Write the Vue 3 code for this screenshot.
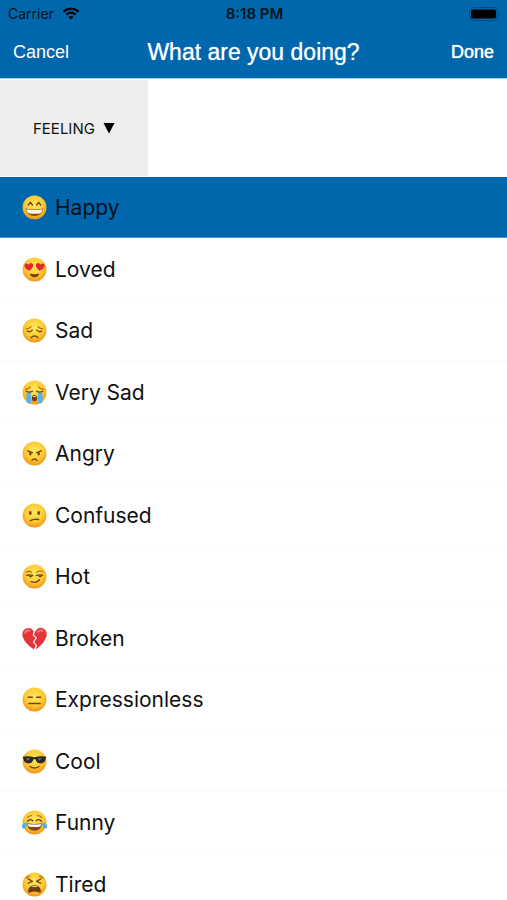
<template>
  <div class="screen">
    <header class="top-bar">
      <!-- Status bar -->
      <div class="status-bar">
        <div class="status-left">
          <span>Carrier</span>
          <svg class="wifi-icon" viewBox="0 0 18 13" aria-hidden="true">
            <path d="M9 12.6 L6.4 9.9 Q9 7.9 11.6 9.9 Z" fill="#000" />
            <path d="M4.3 7.6 Q9 3.8 13.7 7.6" fill="none" stroke="#000" stroke-width="2.2" />
            <path d="M1.3 4.7 Q9 -1.6 16.7 4.7" fill="none" stroke="#000" stroke-width="2.2" />
          </svg>
        </div>
        <span class="status-time">8:18 PM</span>
        <div class="status-right">
          <svg class="battery-icon" viewBox="0 0 32 14" aria-hidden="true">
            <rect x="0.5" y="0.5" width="28" height="13" rx="4" fill="none" stroke="#004a80" />
            <rect x="2" y="2.5" width="25" height="9" rx="2" fill="#000" />
            <path d="M30 5 Q32 7 30 9 Z" fill="#004a80" />
          </svg>
        </div>
      </div>

      <!-- Navigation -->
      <nav class="nav-bar">
        <button type="button" class="nav-btn">Cancel</button>
        <h1 class="nav-title">What are you doing?</h1>
        <button type="button" class="nav-btn done">Done</button>
      </nav>
    </header>

    <!-- Category and free text -->
    <div class="filter-row">
      <button type="button" class="category-btn">
        <span>FEELING</span>
        <svg class="arrow-icon" viewBox="0 0 12 12" aria-hidden="true">
          <path d="M0.5 1 H11.5 L6 11.5 Z" fill="#000" />
        </svg>
      </button>
      <input v-model="note" class="note-input" type="text" aria-label="Feeling" />
    </div>

    <!-- Feelings -->
    <ul class="feeling-list">
      <li v-for="item in feelings" :key="item.id" class="feeling-item">
        <button
          type="button"
          class="feeling-btn"
          :class="{ selected: item.id === selectedId }"
          :aria-pressed="item.id === selectedId"
          @click="selectFeeling(item.id)"
        >
          <svg class="emoji" viewBox="0 0 24 24" aria-hidden="true">
            <defs>
              <radialGradient :id="`face-${item.id}`" cx="50%" cy="38%" r="62%">
                <stop offset="0" stop-color="#ffe85c" />
                <stop offset="0.6" stop-color="#fdcb35" />
                <stop offset="1" stop-color="#ee941b" />
              </radialGradient>
            </defs>

            <circle
              v-if="item.id !== 'broken'"
              cx="12"
              cy="12"
              r="11.5"
              :fill="`url(#face-${item.id})`"
            />

            <g v-if="item.id === 'happy'">
              <path d="M6 9.6 L8 7 L10 9.6 M14 9.6 L16 7 L18 9.6" class="line" />
              <path d="M3.6 13 Q12 14.6 20.4 13 Q19.4 20.2 12 20.2 Q4.6 20.2 3.6 13 Z" fill="#8a4b12" />
              <path d="M4.2 13.7 Q12 15.2 19.8 13.7 Q19.2 17 17.8 17.4 Q12 18.6 6.2 17.4 Q4.8 17 4.2 13.7 Z" fill="#fffbe8" />
            </g>

            <g v-else-if="item.id === 'loved'">
              <path d="M7.2 13.2 Q1.6 10.6 2.4 7.6 Q3.4 5.2 6.2 7.2 Q8.2 4.6 10.4 6.6 Q11.8 9.2 7.2 13.2 Z" fill="#e8262e" />
              <path d="M16.8 13.2 Q22.4 10.6 21.6 7.6 Q20.6 5.2 17.8 7.2 Q15.8 4.6 13.6 6.6 Q12.2 9.2 16.8 13.2 Z" fill="#e8262e" />
              <path d="M7.4 15.8 Q12 17.2 16.6 15.8 Q15.8 19.4 12 19.4 Q8.2 19.4 7.4 15.8 Z" fill="#7d3c12" />
            </g>

            <g v-else-if="item.id === 'sad'">
              <path d="M4 10.4 Q6.4 10.6 8.8 8.2 M15.2 8.2 Q17.6 10.6 20 10.4" class="thin" />
              <path d="M5.2 12.6 Q8 13.8 9.8 11.6 M14.2 11.6 Q16 13.8 18.8 12.6" class="line" />
              <path d="M8.8 18.8 Q12 15.4 15.2 18.8" class="line" />
            </g>

            <g v-else-if="item.id === 'very-sad'">
              <path d="M3.4 9 Q6 8.8 8 6.6 M16 6.6 Q18 8.8 20.6 9" class="thin" />
              <path d="M4.4 12.2 H8.6 V21.6 Q6.2 23.4 4.4 21.4 Z" fill="#51b4ee" />
              <path d="M15.4 12.2 H19.6 V21.4 Q17.8 23.4 15.4 21.6 Z" fill="#51b4ee" />
              <path d="M4 10.8 Q7 12.6 10 10.8 M14 10.8 Q17 12.6 20 10.8" class="line" />
              <ellipse cx="12" cy="17.4" rx="2.6" ry="3" fill="#7b3d13" />
              <path d="M10.2 16.2 Q12 14.4 13.8 16.2 Z" fill="#fff" />
            </g>

            <g v-else-if="item.id === 'angry'">
              <path d="M5.4 9.4 L10 11.2 M18.6 9.4 L14 11.2" class="line" />
              <ellipse cx="8" cy="12.2" rx="1.2" ry="1.7" fill="#70420f" />
              <ellipse cx="16" cy="12.2" rx="1.2" ry="1.7" fill="#70420f" />
              <path d="M9.4 18.6 Q12 16 14.6 18.6" class="line" />
            </g>

            <g v-else-if="item.id === 'confused'">
              <ellipse cx="8" cy="9.6" rx="1.3" ry="1.9" fill="#70420f" />
              <ellipse cx="16" cy="9.6" rx="1.3" ry="1.9" fill="#70420f" />
              <path d="M8 17 Q11.4 15 16 15.8" class="line" />
            </g>

            <g v-else-if="item.id === 'hot'">
              <path d="M3.8 8 Q6.6 6.2 9.4 8 M14 8 Q17.2 5.8 20 7.6" class="thin" />
              <path d="M4.6 10.8 Q7.4 10 10.2 11 M13.8 11 Q16.8 10 19.6 10.8" class="line" />
              <path d="M7.4 11.4 Q8.2 13 9.6 11.4 M16.2 11.4 Q17.4 13 18.6 11.4" class="line" />
              <path d="M8.6 17 Q14.2 18.8 16.8 15" class="line" />
            </g>

            <g v-else-if="item.id === 'broken'">
              <path d="M11.2 5.2 Q8.4 0.6 4 2.4 Q-0.6 4.6 0.6 10 Q2.4 16.4 11.4 22.6 L13.2 18.8 L10.4 15.4 L13 11.6 L10.2 8.6 Z" fill="#e3343a" />
              <path d="M12.8 5 Q16 0.4 20.4 2.4 Q24.8 4.8 23.4 10 Q21.4 16.8 12.8 22.8 L14.6 18.8 L11.6 15.4 L14.4 11.4 L11.4 8.4 Z" fill="#e3343a" />
              <path d="M3 6.6 Q4 3.6 7.2 4.4 M15.4 5.6 Q17.4 3.4 20 4.8" fill="none" stroke="#f98078" stroke-width="1.6" stroke-linecap="round" />
            </g>

            <g v-else-if="item.id === 'expressionless'">
              <path d="M6 9.8 H10 M14 9.8 H18" class="line" />
              <path d="M6.6 15.8 H17.4" class="line" />
            </g>

            <g v-else-if="item.id === 'cool'">
              <path d="M0.6 7.4 Q6 6.4 12 8 Q18 6.4 23.4 7.4 L22.8 9.2 Q22 13.8 17.8 13.8 Q14 13.8 13 9.8 H11 Q10 13.8 6.2 13.8 Q2 13.8 1.2 9.2 Z" fill="#292623" />
              <path d="M4 8.6 L7.6 8.8 L5.4 11.6 Z M15.4 8.8 L18.8 8.6 L16.8 11.4 Z" fill="#77716a" />
              <path d="M7.6 16.8 Q12 19.8 16.4 16.8" class="line" />
            </g>

            <g v-else-if="item.id === 'funny'">
              <path d="M5 7.4 Q6.8 5.2 9.2 5.6 M14.8 5.6 Q17.2 5.2 19 7.4" class="thin" />
              <path d="M5.4 10.8 Q7.8 7.8 10.4 10.4 M13.6 10.4 Q16.2 7.8 18.6 10.8" class="line" />
              <path d="M4.8 12.8 Q12 14 19.2 12.8 Q18.4 20 12 20 Q5.6 20 4.8 12.8 Z" fill="#83451a" />
              <path d="M5.6 13.4 Q12 14.6 18.4 13.4 L17.6 15.8 Q12 16.8 6.4 15.8 Z" fill="#fff" />
              <path d="M4.6 12 Q-0.4 12.6 0 16.2 Q0.4 18.6 2.6 17.6 Q4.4 16.4 4.6 12 Z" fill="#48b3ee" />
              <path d="M19.4 12 Q24.4 12.6 24 16.2 Q23.6 18.6 21.4 17.6 Q19.6 16.4 19.4 12 Z" fill="#48b3ee" />
            </g>

            <g v-else-if="item.id === 'tired'">
              <path d="M3.8 6.2 Q5 4 7.4 3.8 M16.6 3.8 Q19 4 20.2 6.2" class="thin" />
              <path d="M6 6.6 L10 9 L5.8 10.8 M18 6.6 L14 9 L18.2 10.8" class="line" />
              <path d="M5.8 18.8 Q6.2 12.6 12 12.6 Q17.8 12.6 18.2 18.8 Q18 20.2 16.6 19.6 Q12 17.8 7.4 19.6 Q6 20.2 5.8 18.8 Z" fill="#70380f" />
              <path d="M8.4 14.2 Q12 12.6 15.6 14.2 Q12 15 8.4 14.2 Z" fill="#e9d9b8" />
            </g>
          </svg>
          <span>{{ item.label }}</span>
        </button>
      </li>
    </ul>
  </div>
</template>

<script setup>
import { ref } from "vue";

const feelings = [
  { id: "happy", label: "Happy" },
  { id: "loved", label: "Loved" },
  { id: "sad", label: "Sad" },
  { id: "very-sad", label: "Very Sad" },
  { id: "angry", label: "Angry" },
  { id: "confused", label: "Confused" },
  { id: "hot", label: "Hot" },
  { id: "broken", label: "Broken" },
  { id: "expressionless", label: "Expressionless" },
  { id: "cool", label: "Cool" },
  { id: "funny", label: "Funny" },
  { id: "tired", label: "Tired" },
];

const selectedId = ref("happy");
const note = ref("");

function selectFeeling(id) {
  selectedId.value = id;
}
</script>

<style>
body {
  margin: 0;
  background: #fff;
}
</style>

<style scoped>
.screen {
  height: 100vh;
  display: flex;
  flex-direction: column;
  background: #fff;
  color: #111;
  font-family: Inter, "Liberation Sans", sans-serif;
}

button {
  border: none;
  margin: 0;
  padding: 0;
  background: none;
  color: inherit;
  font-family: inherit;
  cursor: pointer;
}

/* Blue header */
.top-bar {
  flex-shrink: 0;
  background: #0067ac;
  border-bottom: 1px solid #a3d0ee;
}

.status-bar {
  display: grid;
  grid-template-columns: 1fr auto 1fr;
  align-items: center;
  height: 27px;
  padding: 0 6px 0 8px;
  color: #001320;
  font-size: 14px;
}

.status-left {
  display: flex;
  align-items: center;
  gap: 8px;
}

.status-time {
  font-size: 15px;
  font-weight: 600;
}

.status-right {
  display: flex;
  justify-content: flex-end;
}

.wifi-icon {
  width: 18px;
  height: 13px;
}

.battery-icon {
  width: 32px;
  height: 14px;
}

.nav-bar {
  display: grid;
  grid-template-columns: 1fr auto 1fr;
  align-items: center;
  height: 51px;
  padding: 0 13px;
  color: #fff;
  font-family: "Liberation Sans", Arial, sans-serif;
}

.nav-btn {
  justify-self: start;
  font-size: 18px;
}

.nav-btn.done {
  justify-self: end;
  text-shadow: 0 0 1px #fff;
}

.nav-title {
  margin: 0;
  font-size: 23px;
  font-weight: 400;
  text-shadow: 0 0 1px rgba(255, 255, 255, 0.7);
}

/* Category row */
.filter-row {
  flex-shrink: 0;
  display: flex;
  height: 96px;
  padding: 1px 0;
}

.category-btn {
  display: flex;
  align-items: center;
  gap: 8px;
  padding: 0 33px;
  background: #eee;
  font-size: 15px;
}

.arrow-icon {
  width: 12px;
  height: 12px;
}

.note-input {
  flex: 1;
  min-width: 0;
  padding: 0 16px;
  border: none;
  outline: none;
  background: #fff;
  font-family: inherit;
  font-size: 21px;
}

/* Feeling rows */
.feeling-list {
  flex: 1;
  min-height: 0;
  margin: 0;
  padding: 0;
  overflow-y: auto;
  scrollbar-width: none;
  list-style: none;
}

.feeling-item {
  height: 61px;
}

.feeling-item:nth-child(even) {
  height: 62px;
}

.feeling-btn {
  box-sizing: border-box;
  display: flex;
  align-items: center;
  gap: 8px;
  width: 100%;
  height: 100%;
  padding: 1px 22px 0;
  border-bottom: 1px solid #fafafa;
  font-size: 21px;
  text-align: left;
}

.feeling-btn.selected {
  background: #0067ac;
  border-bottom-color: #4a9bd0;
  color: #00101c;
}

.emoji {
  flex-shrink: 0;
  width: 25px;
  height: 25px;
}

.line,
.thin {
  fill: none;
  stroke: #70420f;
  stroke-width: 1.3;
  stroke-linecap: round;
  stroke-linejoin: round;
}

.thin {
  stroke: #a8660f;
  stroke-width: 1;
}
</style>
